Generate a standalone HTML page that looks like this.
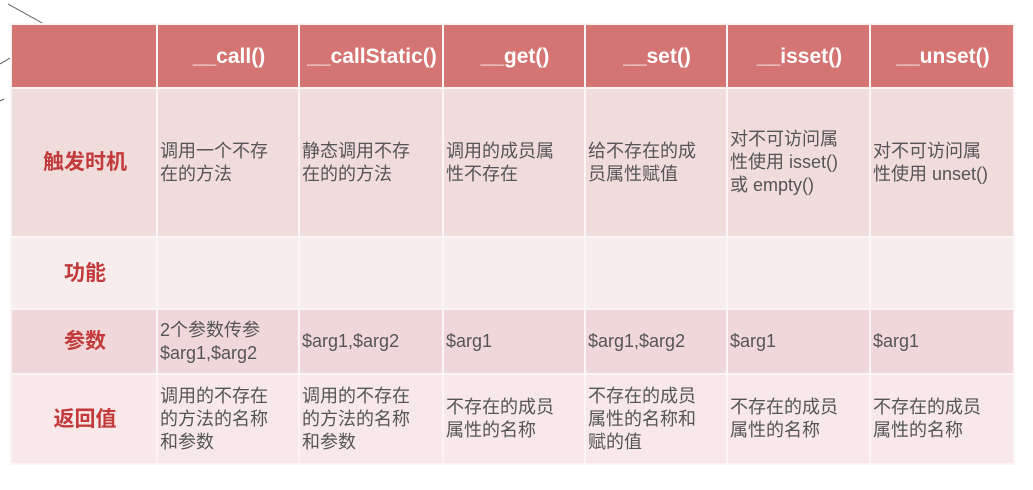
<!DOCTYPE html>
<html><head><meta charset="utf-8"><style>
html,body{margin:0;padding:0;background:#fff;width:1033px;height:490px;overflow:hidden;position:relative;font-family:"Liberation Sans","Noto Sans CJK SC",sans-serif}
table{position:absolute;left:10px;top:23px;border-collapse:collapse}
td{border:2px solid #fbf5f5;padding:0 0 0 2px;color:#555;font-size:18px;line-height:23px;vertical-align:middle;text-align:left}
tr.h td{background:#d47473;color:#fff;font-weight:bold;font-size:21px;text-align:center;height:62px}
tr.r1 td{background:#f1dcdc;height:147px}
tr.r2 td{background:#f7eded;height:70px}
tr.r3 td{background:#f0d8da;height:63px}
tr.r4 td{background:#f8e8e9;height:88px}
td.l{color:#c23a3a;font-weight:bold;font-size:21px;text-align:center}
</style></head><body>
<svg width="60" height="110" style="position:absolute;left:0;top:0">
<line x1="8" y1="4" x2="44" y2="24" stroke="#555" stroke-width="1"/>
<line x1="0" y1="64" x2="10" y2="58" stroke="#555" stroke-width="1"/>
<line x1="0" y1="101" x2="4" y2="99" stroke="#555" stroke-width="1"/>
</svg>
<table>
<colgroup><col style="width:146px"><col style="width:142px"><col style="width:144px"><col style="width:142px"><col style="width:142px"><col style="width:143px"><col style="width:144px"></colgroup>
<tr class="h"><td></td><td>__call()</td><td>__callStatic()</td><td>__get()</td><td>__set()</td><td>__isset()</td><td>__unset()</td></tr>
<tr class="r1"><td class="l">触发时机</td><td>调用一个不存<br>在的方法</td><td>静态调用不存<br>在的的方法</td><td>调用的成员属<br>性不存在</td><td>给不存在的成<br>员属性赋值</td><td>对不可访问属<br>性使用 isset()<br>或 empty()</td><td>对不可访问属<br>性使用 unset()</td></tr>
<tr class="r2"><td class="l">功能</td><td></td><td></td><td></td><td></td><td></td><td></td></tr>
<tr class="r3"><td class="l">参数</td><td>2个参数传参<br>$arg1,$arg2</td><td>$arg1,$arg2</td><td>$arg1</td><td>$arg1,$arg2</td><td>$arg1</td><td>$arg1</td></tr>
<tr class="r4"><td class="l">返回值</td><td>调用的不存在<br>的方法的名称<br>和参数</td><td>调用的不存在<br>的方法的名称<br>和参数</td><td>不存在的成员<br>属性的名称</td><td>不存在的成员<br>属性的名称和<br>赋的值</td><td>不存在的成员<br>属性的名称</td><td>不存在的成员<br>属性的名称</td></tr>
</table>
</body></html>
